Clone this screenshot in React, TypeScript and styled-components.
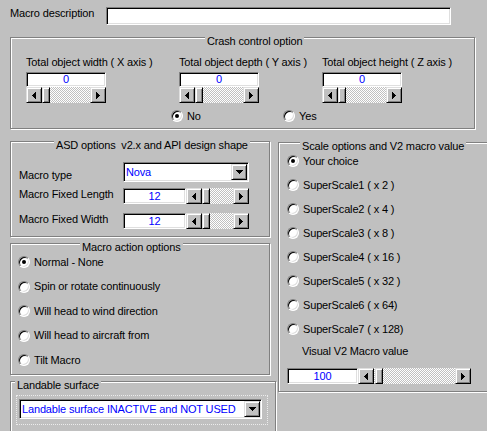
import React from "react";
import styled, { createGlobalStyle, css } from "styled-components";

const GlobalStyle = createGlobalStyle`
  html, body { margin: 0; padding: 0; background: #c0c0c0; }
  body {
    font-family: "Liberation Sans", Arial, sans-serif;
    font-size: 11px;
    line-height: 13px;
    letter-spacing: -0.15px;
    color: #000;
  }
`;

const sunken = css`
  box-sizing: border-box;
  border: 1px solid;
  border-color: #808080 #fff #fff #808080;
  box-shadow: inset 1px 1px 0 #000, inset -1px -1px 0 #dfdfdf;
  background: #fff;
`;

const raised = css`
  box-sizing: border-box;
  border: 1px solid;
  border-color: #dfdfdf #000 #000 #dfdfdf;
  box-shadow: inset 1px 1px 0 #fff, inset -1px -1px 0 #808080;
  background: #c0c0c0;
`;

const Window = styled.div`
  width: 487px;
  height: 431px;
  overflow: hidden;
  box-sizing: border-box;
  padding: 7px 0 0 10px;
  background: #c0c0c0;
`;

const TopRow = styled.div`
  display: flex;
  align-items: flex-start;
`;

const Caption = styled.div<{ $w?: number; $mt?: number; $pl?: number }>`
  white-space: nowrap;
  flex: none;
  width: ${({ $w }) => ($w ? `${$w}px` : "auto")};
  margin-top: ${({ $mt }) => $mt ?? 0}px;
  padding-left: ${({ $pl }) => $pl ?? 0}px;
`;

const DescField = styled.div`
  ${sunken};
  width: 345px;
  height: 18px;
`;

const Group = styled.div<{ $w: number; $mt?: number; $h?: number }>`
  box-sizing: border-box;
  flex: none;
  width: ${({ $w }) => $w}px;
  height: ${({ $h }) => ($h ? `${$h}px` : "auto")};
  margin-top: ${({ $mt }) => $mt ?? 0}px;
  border: 1px solid #808080;
  box-shadow: inset 1px 1px 0 #fff, 1px 1px 0 #fff;
`;

const GroupTitle = styled.div<{ $indent: number }>`
  width: fit-content;
  margin: -3px 0 0 ${({ $indent }) => $indent}px;
  padding: 0 2px;
  background: #c0c0c0;
  white-space: nowrap;
`;

const AxisGrid = styled.div`
  display: grid;
  grid-template-columns: 153px 143px 1fr;
  margin-top: 8px;
  padding-left: 15px;
`;

const AxisCell = styled.div`
  display: flex;
  flex-direction: column;
  align-items: flex-start;
`;

const Field = styled.div<{ $w: number; $h: number; $mt?: number }>`
  ${sunken};
  flex: none;
  width: ${({ $w }) => $w}px;
  height: ${({ $h }) => $h}px;
  margin-top: ${({ $mt }) => $mt ?? 0}px;
  display: flex;
  align-items: center;
  justify-content: center;
  color: #0000ff;
`;

const Scroll = styled.div<{ $w: number }>`
  display: flex;
  flex: none;
  width: ${({ $w }) => $w}px;
  height: 16px;
`;

const ScrollBtn = styled.div`
  ${raised};
  flex: none;
  width: 16px;
  height: 16px;
  display: flex;
  align-items: center;
  justify-content: center;
`;

const Track = styled.div`
  flex: 1;
  display: flex;
  background-color: #fff;
  background-image: repeating-conic-gradient(#c0c0c0 0% 25%, #fff 0% 50%);
  background-size: 2px 2px;
`;

const Thumb = styled.div<{ $at: number }>`
  ${raised};
  width: 8px;
  height: 16px;
  margin-left: ${({ $at }) => $at}px;
`;

const Glyph = styled.svg`
  display: block;
  shape-rendering: crispEdges;
`;

const ArrowLeft = () => (
  <Glyph width="4" height="7" viewBox="0 0 4 7">
    <path d="M3 0h1v7h-1z M2 1h1v5h-1z M1 2h1v3h-1z M0 3h1v1h-1z" fill="#000" />
  </Glyph>
);

const ArrowRight = () => (
  <Glyph width="4" height="7" viewBox="0 0 4 7">
    <path d="M0 0h1v7h-1z M1 1h1v5h-1z M2 2h1v3h-1z M3 3h1v1h-1z" fill="#000" />
  </Glyph>
);

const ArrowDown = () => (
  <Glyph width="7" height="4" viewBox="0 0 7 4">
    <path d="M0 0h7v1h-7z M1 1h5v1h-5z M2 2h3v1h-3z M3 3h1v1h-1z" fill="#000" />
  </Glyph>
);

function ScrollBar({ width, thumbAt = 0 }: { width: number; thumbAt?: number }) {
  return (
    <Scroll $w={width}>
      <ScrollBtn>
        <ArrowLeft />
      </ScrollBtn>
      <Track>
        <Thumb $at={thumbAt} />
      </Track>
      <ScrollBtn>
        <ArrowRight />
      </ScrollBtn>
    </Scroll>
  );
}

const Combo = styled.div<{ $w: number }>`
  ${sunken};
  flex: none;
  width: ${({ $w }) => $w}px;
  height: 20px;
  padding: 1px;
  display: flex;
  align-items: center;
`;

const ComboText = styled.span`
  flex: 1;
  padding-left: 1px;
  color: #0000ff;
  white-space: nowrap;
  overflow: hidden;
`;

const DropBtn = styled(ScrollBtn)``;

function ComboBox({ width, text }: { width: number; text: string }) {
  return (
    <Combo $w={width}>
      <ComboText>{text}</ComboText>
      <DropBtn>
        <ArrowDown />
      </DropBtn>
    </Combo>
  );
}

const RadioRow = styled.div`
  display: flex;
  margin-top: 6.5px;
  padding-left: 160px;
`;

const RadioList = styled.div<{ $gap: number; $pl: number }>`
  display: flex;
  flex-direction: column;
  gap: ${({ $gap }) => $gap}px;
  margin-top: 1.5px;
  padding-left: ${({ $pl }) => $pl}px;
`;

const Option = styled.div<{ $w?: number }>`
  display: flex;
  align-items: center;
  gap: 4px;
  height: 13px;
  white-space: nowrap;
  width: ${({ $w }) => ($w ? `${$w}px` : "auto")};
`;

const RadioDot = styled.span<{ $on?: boolean }>`
  box-sizing: border-box;
  flex: none;
  width: 12px;
  height: 12px;
  border-radius: 50%;
  border: 1px solid;
  border-color: #808080 #fff #fff #808080;
  box-shadow: inset 1px 1px 0 #000, inset -1px -1px 0 #dfdfdf;
  background: #fff;
  display: flex;
  align-items: center;
  justify-content: center;

  &::after {
    content: "";
    display: ${({ $on }) => ($on ? "block" : "none")};
    width: 4px;
    height: 4px;
    border-radius: 50%;
    background: #000;
  }
`;

function Radio({ label, on, w }: { label: string; on?: boolean; w?: number }) {
  return (
    <Option $w={w}>
      <RadioDot $on={on} />
      <span>{label}</span>
    </Option>
  );
}

const Columns = styled.div`
  display: flex;
  align-items: flex-start;
  gap: 2px;
  margin-top: 12px;
`;

const LeftColumn = styled.div`
  display: flex;
  flex-direction: column;
  align-items: flex-start;
  width: 266px;
  flex: none;
`;

const FormRow = styled.div<{ $mt: number; $align?: string; $pl?: number }>`
  display: flex;
  align-items: ${({ $align }) => $align ?? "flex-start"};
  margin-top: ${({ $mt }) => $mt}px;
  padding-left: ${({ $pl }) => $pl ?? 8}px;
`;

const GroupBody = styled.div<{ $pb: number }>`
  padding-bottom: ${({ $pb }) => $pb}px;
`;

const FocusFrame = styled.div`
  box-sizing: border-box;
  width: 252px;
  margin: 3px 0 0 5px;
  padding: 3px 0 5px 2px;
  border: 1px dotted #ececec;
`;

const axes = [
  "Total object width ( X axis )",
  "Total object depth ( Y axis )",
  "Total object height ( Z axis )",
];

const actions = [
  "Normal - None",
  "Spin or rotate continuously",
  "Will head to wind direction",
  "Will head to aircraft from",
  "Tilt Macro",
];

const scales = [
  "Your choice",
  "SuperScale1 ( x 2 )",
  "SuperScale2 ( x 4 )",
  "SuperScale3 ( x 8 )",
  "SuperScale4 ( x 16 )",
  "SuperScale5 ( x 32 )",
  "SuperScale6 ( x 64)",
  "SuperScale7 ( x 128)",
];

export default function App() {
  return (
    <>
      <GlobalStyle />
      <Window>
        <TopRow>
          <Caption $w={96}>Macro description</Caption>
          <DescField />
        </TopRow>

        <Group $w={465} $mt={12}>
          <GroupTitle $indent={194}>Crash control option</GroupTitle>
          <GroupBody $pb={5.5}>
            <AxisGrid>
              {axes.map((a) => (
                <AxisCell key={a}>
                  <Caption>{a}</Caption>
                  <Field $w={80} $h={15} $mt={3}>0</Field>
                  <ScrollBar width={80} />
                </AxisCell>
              ))}
            </AxisGrid>
            <RadioRow>
              <Radio label="No" on w={112} />
              <Radio label="Yes" />
            </RadioRow>
          </GroupBody>
        </Group>

        <Columns>
          <LeftColumn>
            <Group $w={260}>
              <GroupTitle $indent={43}>ASD options&nbsp; v2.x and API design shape</GroupTitle>
              <GroupBody $pb={7}>
                <FormRow $mt={10} $align="flex-end">
                  <Caption $w={104}>Macro type</Caption>
                  <ComboBox width={126} text="Nova" />
                </FormRow>
                <FormRow $mt={6}>
                  <Caption $w={104}>Macro Fixed Length</Caption>
                  <Field $w={63} $h={16}>12</Field>
                  <ScrollBar width={63} />
                </FormRow>
                <FormRow $mt={9}>
                  <Caption $w={104}>Macro Fixed Width</Caption>
                  <Field $w={63} $h={16}>12</Field>
                  <ScrollBar width={63} />
                </FormRow>
              </GroupBody>
            </Group>

            <Group $w={260} $mt={6}>
              <GroupTitle $indent={69}>Macro action options</GroupTitle>
              <GroupBody $pb={7.5}>
                <RadioList $gap={11.5} $pl={7}>
                  {actions.map((a, i) => (
                    <Radio key={a} label={a} on={i === 0} />
                  ))}
                </RadioList>
              </GroupBody>
            </Group>

            <Group $w={266} $mt={6} $h={70}>
              <GroupTitle $indent={4}>Landable surface</GroupTitle>
              <FocusFrame>
                <ComboBox width={243} text="Landable surface INACTIVE and NOT USED" />
              </FocusFrame>
            </Group>
          </LeftColumn>

          <Group $w={220} $mt={1}>
            <GroupTitle $indent={21}>Scale options and V2 macro value</GroupTitle>
            <GroupBody $pb={7}>
              <RadioList $gap={11} $pl={8}>
                {scales.map((s, i) => (
                  <Radio key={s} label={s} on={i === 0} />
                ))}
              </RadioList>
              <Caption $mt={9} $pl={23}>Visual V2 Macro value</Caption>
              <FormRow $mt={10.5}>
                <Field $w={71} $h={16}>100</Field>
                <ScrollBar width={113} thumbAt={1} />
              </FormRow>
            </GroupBody>
          </Group>
        </Columns>
      </Window>
    </>
  );
}
